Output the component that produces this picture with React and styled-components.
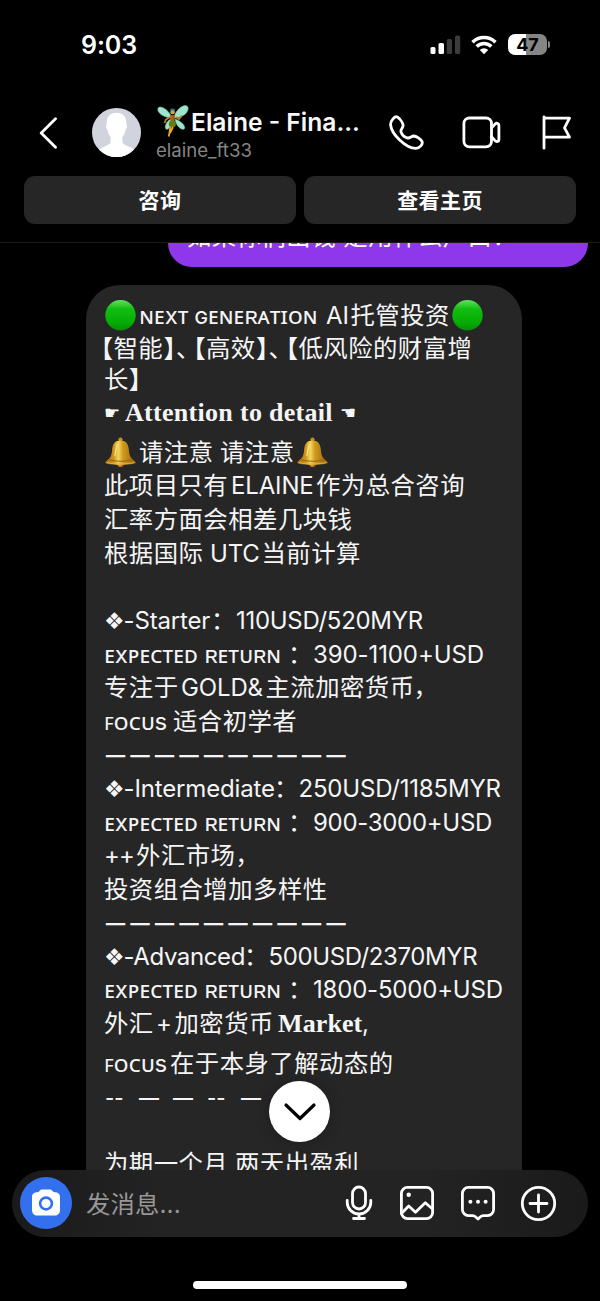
import styled, { createGlobalStyle, css } from "styled-components";

const GlobalStyle = createGlobalStyle`
  * {
    box-sizing: border-box;
  }

  body {
    margin: 0;
    background: #000;
    color: #f5f5f5;
    font-family: Inter, "Noto Sans CJK SC", sans-serif;
  }

  svg {
    display: block;
    flex-shrink: 0;
  }
`;

const Screen = styled.div`
  display: flex;
  flex-direction: column;
  width: 600px;
  height: 1301px;
  background: #000;
  overflow: hidden;
`;

const Header = styled.header`
  flex: 0 0 243px;
  border-bottom: 1px solid #1b1b1b;
`;

const StatusBar = styled.div`
  display: flex;
  align-items: center;
  height: 90px;
  padding: 0 50px 0 81px;
`;

const Clock = styled.div`
  flex: 1;
  color: #fff;
  font-size: 25px;
  font-weight: 600;
  letter-spacing: -0.1px;
`;

const StatusIcons = styled.div`
  display: flex;
  align-items: center;
  margin-top: -1px;
`;

const Battery = styled.div`
  display: flex;
  align-items: center;
  justify-content: center;
  width: 39px;
  height: 21px;
  margin-left: 11px;
  border-radius: 7px;
  background: linear-gradient(90deg, #fff 47%, #858585 47%);
  color: #000;
  font-size: 18px;
  font-weight: 700;
  line-height: 21px;
`;

const BatteryTip = styled.span`
  width: 2px;
  height: 7px;
  margin-left: 1px;
  border-radius: 0 2px 2px 0;
  background: #858585;
`;

const NavBar = styled.div`
  display: flex;
  align-items: center;
  height: 86px;
  padding-left: 39px;
`;

const Avatar = styled.div`
  width: 49px;
  height: 49px;
  margin: -1px 0 0 34px;
  border-radius: 50%;
  overflow: hidden;
`;

const Contact = styled.div`
  width: 218px;
  margin: 3px 0 0 15px;
`;

const ContactName = styled.div`
  display: flex;
  align-items: center;
  height: 32px;
  color: #f8f8f8;
  font-size: 24.6px;
  font-weight: 600;
  white-space: nowrap;

  svg {
    margin: -2px 2px 0 1px;
  }
`;

const ContactHandle = styled.div`
  height: 26px;
  color: #858585;
  font-size: 18.6px;
  line-height: 25px;
`;

const NavActions = styled.div`
  display: flex;
  align-items: center;
  margin: -1px 0 0 15px;
`;

const Actions = styled.div`
  display: flex;
  gap: 8px;
  padding: 0 24px;
`;

const ActionButton = styled.button`
  flex: 1;
  height: 48px;
  padding: 0 0 2px;
  border: 0;
  border-radius: 11px;
  background: #262626;
  color: #fff;
  font: 700 21px "Noto Sans CJK SC", sans-serif;
  letter-spacing: 0.4px;
`;

const Thread = styled.main`
  position: relative;
  flex: 0 0 927px;
  display: flex;
  flex-direction: column;
  overflow: hidden;
`;

const SentBubble = styled.div`
  flex: 0 0 24px;
  display: flex;
  align-items: flex-end;
  align-self: flex-end;
  width: 420px;
  margin-right: 12px;
  padding: 0 19px 13px;
  border-radius: 0 0 27px 27px;
  background: #8f38eb;
  color: #fff;
  font-size: 24.4px;
  line-height: 36px;
  letter-spacing: 0.45px;
  white-space: nowrap;
  overflow: hidden;
`;

const ReceivedBubble = styled.div`
  flex: 0 0 950px;
  width: 436px;
  margin: 18px 0 0 86px;
  padding: 13.5px 0 0 18px;
  border-radius: 34px 34px 0 0;
  background: #262626;
`;

const Line = styled.div`
  height: 33.6px;
  margin-top: ${({ $gap }) => $gap || 0}px;
  margin-left: ${({ $indent }) => $indent || 0}px;
  font-size: 24px;
  line-height: 33.6px;
  white-space: nowrap;
`;

const kinds = {
  latin: css`
    font-size: 24px;
    letter-spacing: -0.15px;
  `,
  cjk: css`
    font-family: "Noto Sans CJK SC", sans-serif;
    font-size: 24.4px;
    letter-spacing: 0.45px;
  `,
  half: css`
    font-family: "Noto Sans CJK SC", sans-serif;
    font-size: 24.4px;
    font-feature-settings: "halt";
  `,
  bracket: css`
    font-family: "Noto Sans CJK SC", sans-serif;
    font-size: 24.4px;
    font-weight: 700;
    font-feature-settings: "halt";
  `,
  caps: css`
    font-family: Inter, "Noto Sans", sans-serif;
    font-size: 24px;
    letter-spacing: -0.35px;
  `,
  serif: css`
    font-family: "Liberation Serif", serif;
    font-size: 26px;
    font-weight: 700;
    letter-spacing: 0.3px;
  `,
  symbol: css`
    font-family: "DejaVu Sans", sans-serif;
    font-size: 23px;
  `,
  hand: css`
    font-family: "DejaVu Sans", sans-serif;
    font-size: 18px;
    font-weight: 700;
    vertical-align: 2px;
  `,
  rule: css`
    padding-left: 1px;
    font-family: "Noto Sans CJK SC", sans-serif;
    font-size: 21px;
    font-weight: 500;
    letter-spacing: 3.5px;
    vertical-align: -1px;
  `,
  dash: css`
    padding-left: 1px;
    font-size: 20px;
    font-weight: 500;
    letter-spacing: 0;
  `,
};

const Run = styled.span`
  display: inline-block;
  width: ${({ $w }) => $w}px;
  line-height: 0;
  white-space: pre;
  ${({ $kind }) => kinds[$kind]}
  ${({ $track }) =>
    $track !== undefined &&
    css`
      letter-spacing: ${$track}px;
    `}
`;

const Emoji = styled.span`
  display: inline-block;
  width: ${({ $w }) => $w}px;
  height: 31px;
  vertical-align: -7px;

  svg {
    margin-left: 1px;
  }
`;

const ScrollButton = styled.button`
  position: absolute;
  bottom: 28px;
  left: 269px;
  display: flex;
  align-items: center;
  justify-content: center;
  width: 61px;
  height: 61px;
  padding: 0;
  border: 0;
  border-radius: 50%;
  background: #fff;
  box-shadow: 0 0 14px rgba(0, 0, 0, 0.25);
`;

const Composer = styled.footer`
  flex: 0 0 67px;
  display: flex;
  align-items: center;
  margin: 0 12px;
  padding: 0 31px 1px 8px;
  border-radius: 34px;
  background: linear-gradient(90deg, #1a1a1a, #232323 25%, #232323 72%, #1a1a1a);
`;

const CameraButton = styled.div`
  display: flex;
  align-items: center;
  justify-content: center;
  width: 52px;
  height: 52px;
  border-radius: 50%;
  background: #3370ee;
`;

const Placeholder = styled.div`
  flex: 1;
  margin: -2px 0 0 14px;
  color: #979797;
  font-size: 24.4px;
  letter-spacing: 0.1px;
`;

const Tools = styled.div`
  display: flex;
  align-items: center;
`;

const HomeIndicator = styled.div`
  width: 214px;
  height: 8px;
  margin: 44px auto 0 193px;
  border-radius: 4px;
  background: #fff;
`;

const WifiIcon = styled.svg`
  margin-left: 10px;
`;

const LineIcon = styled.svg`
  margin-left: ${({ $left }) => $left || 0}px;
  fill: none;
  stroke: #fff;
  stroke-width: 2.8;
  stroke-linejoin: round;
  stroke-linecap: round;
`;

const Dot = styled.circle`
  fill: #fff;
  stroke: none;
`;

const GreenCircle = () => (
  <svg width="31" height="31" viewBox="0 0 31 31">
    <defs>
      <linearGradient id="green" x1="0" y1="0" x2="0" y2="1">
        <stop offset="0" stopColor="#5fe25c" />
        <stop offset="0.3" stopColor="#12bd10" />
        <stop offset="0.75" stopColor="#04ac04" />
        <stop offset="1" stopColor="#078c06" />
      </linearGradient>
    </defs>
    <circle cx="15.5" cy="15.2" r="15.2" fill="url(#green)" />
  </svg>
);

const Bell = () => (
  <svg width="31" height="31" viewBox="0 0 31 31">
    <defs>
      <linearGradient id="gold" x1="0" x2="1">
        <stop offset="0" stopColor="#a66c10" />
        <stop offset="0.28" stopColor="#cf951d" />
        <stop offset="0.43" stopColor="#f5d75a" />
        <stop offset="0.58" stopColor="#cf9a1f" />
        <stop offset="1" stopColor="#9a610b" />
      </linearGradient>
    </defs>
    <circle cx="15.5" cy="2.6" r="2.1" fill="#c48e20" />
    <circle cx="15.5" cy="26.8" r="3.4" fill="#a96812" />
    <path
      d="M15.5 3.5c5.4 0 7.8 3.3 8.3 8.5.5 6.2 1 8.5 6.4 12.5 1 1.1.3 2-1.2 2.3-8 1.5-19 1.5-27 0-1.5-.3-2.2-1.2-1.2-2.3C6.2 20.5 6.7 18.2 7.2 12c.5-5.2 2.9-8.5 8.3-8.5z"
      fill="url(#gold)"
    />
    <path d="M4.5 22.6c6 2.2 16 2.2 22 0" fill="none" stroke="#94600d" strokeWidth="1" />
    <path d="M1.5 25.4c7 2 21 2 28 0" fill="none" stroke="#e0b63c" strokeWidth="1" />
    <path d="M12.5 7c-1.6 3-1.8 9-2.8 12" fill="none" stroke="#f5e288" strokeWidth="1.3" />
    <circle cx="15" cy="28" r="1.3" fill="#e3a23a" />
  </svg>
);

const Fairy = () => (
  <svg width="32" height="32" viewBox="0 0 32 32">
    <g fill="#9de5ce" stroke="#69b9a5" strokeWidth="0.6">
      <path d="M14.5 13C11 13 3 10.5 1 6 .2 2.5 2 1.5 4.5 2.3 9 3.5 13.5 8 14.5 13z" />
      <path d="M17 13C17.5 7.5 23 1.5 27.5.6c3.5-.4 4.6 2.5 2.9 5.6C28.5 10.5 22 13 17 13z" />
      <path d="M14 14c-3.5 1.5-6 5.5-5.7 8.8.8 2.4 3.2 1.7 4.2-.3C14 20 15 17 14 14z" />
      <path d="M18 14c3.5 1 8.5 4.3 9.7 8 .5 2.5-2 3-4.2 1.6C20.5 21.5 18.5 18 18 14z" />
    </g>
    <path d="M13 12l-4 2.5-1.5 3.5M19 12l3 2 3-3.5" fill="none" stroke="#bd8425" strokeWidth="1.7" />
    <path d="M13 4.5c1-1.4 4.5-1.4 5 .5L17.5 9h-4z" fill="#276e75" />
    <circle cx="15.6" cy="7.2" r="2" fill="#dba13a" />
    <path d="M13.2 10h5l-.8 6h-3.6z" fill="#a85e17" />
    <path d="M13.5 15.5h4.2c2 2.5 1.5 6-.5 6.5-3 .5-5.5-.5-5.5-2.5 0-1.5.8-3 1.800-4z" fill="#667d16" />
    <path d="M13.5 21.5L11.8 31.5M16 22l-3 6" fill="none" stroke="#efa60f" strokeWidth="1.8" />
  </svg>
);

const emojis = { green: GreenCircle, bell: Bell };

// each run: [kind, text, advance, letter spacing]
const lines = [
  {
    runs: [
      ["green", "", 35],
      ["caps", "ɴᴇxᴛ ɢᴇɴᴇʀᴀᴛɪᴏɴ", 187],
      ["latin", "AI", 24.5],
      ["cjk", "托管投资", 100.5],
      ["green", "", 32],
    ],
  },
  {
    gap: 0.2,
    indent: -3,
    runs: [
      ["bracket", "【", 12.5],
      ["cjk", "智能", 50],
      ["bracket", "】", 12.5],
      ["half", "、", 17.5],
      ["bracket", "【", 12.5],
      ["cjk", "高效", 50],
      ["bracket", "】", 12.5],
      ["half", "、", 17.5],
      ["bracket", "【", 12.5],
      ["cjk", "低风险的财富增", 175],
    ],
  },
  { gap: -3.1, runs: [["cjk", "长", 24.8], ["bracket", "】", 13]] },
  {
    gap: -0.2,
    runs: [["hand", "☛", 21], ["serif", "Attention to detail", 215], ["hand", "☚", 20]],
  },
  {
    gap: 6,
    runs: [["bell", "", 35], ["cjk", "请注意", 81], ["cjk", "请注意", 76], ["bell", "", 32]],
  },
  { runs: [["cjk", "此项目只有", 127], ["latin", "ELAINE", 85], ["cjk", "作为总合咨询", 150]] },
  { gap: 0.2, runs: [["cjk", "汇率方面会相差几块钱", 250]] },
  { runs: [["cjk", "根据国际", 106], ["latin", "UTC", 51.5], ["cjk", "当前计算", 100]] },
  { runs: [] },
  {
    runs: [
      ["symbol", "❖", 19.5],
      ["latin", "-Starter", 87.5],
      ["cjk", "：", 25],
      ["latin", "110USD/520MYR", 190, -0.3],
    ],
  },
  {
    runs: [["caps", "ᴇxᴘᴇᴄᴛᴇᴅ ʀᴇᴛᴜʀɴ", 184], ["cjk", "：", 25], ["latin", "390-1100+USD", 180, -0.1]],
  },
  {
    runs: [["cjk", "专注于", 77], ["latin", "GOLD&", 84.5], ["cjk", "主流加密货币", 148], ["cjk", "，", 24]],
  },
  { runs: [["caps", "ꜰᴏᴄᴜs", 69], ["cjk", "适合初学者", 126]] },
  { runs: [["rule", "一一一一一一一一一一", 250]] },
  {
    runs: [
      ["symbol", "❖", 19.5],
      ["latin", "-Intermediate", 150.5],
      ["cjk", "：", 24.5],
      ["latin", "250USD/1185MYR", 204, -0.2],
    ],
  },
  {
    runs: [["caps", "ᴇxᴘᴇᴄᴛᴇᴅ ʀᴇᴛᴜʀɴ", 184], ["cjk", "：", 25], ["latin", "900-3000+USD", 180, -0.3]],
  },
  { runs: [["latin", "++", 32, -1], ["cjk", "外汇市场，", 126]] },
  { runs: [["cjk", "投资组合增加多样性", 226]] },
  { runs: [["rule", "一一一一一一一一一一", 250]] },
  {
    runs: [
      ["symbol", "❖", 19.5],
      ["latin", "-Advanced", 120.5, -0.4],
      ["cjk", "：", 24.5],
      ["latin", "500USD/2370MYR", 210, -0.4],
    ],
  },
  {
    runs: [["caps", "ᴇxᴘᴇᴄᴛᴇᴅ ʀᴇᴛᴜʀɴ", 184], ["cjk", "：", 25], ["latin", "1800-5000+USD", 192, -0.2]],
  },
  {
    runs: [
      ["cjk", "外汇", 52],
      ["latin", "+", 18.5],
      ["cjk", "加密货币", 103.5],
      ["serif", "Market", 84, 0.1],
      ["latin", ",", 24],
    ],
  },
  { gap: 6, runs: [["caps", "ꜰᴏᴄᴜs", 66], ["cjk", "在于本身了解动态的", 226]] },
  {
    runs: [
      ["dash", "--", 34],
      ["dash", "—", 34],
      ["dash", "—", 34],
      ["dash", "--", 34],
      ["dash", "—", 34],
    ],
  },
  { runs: [] },
  { runs: [["cjk", "为期一个月", 131], ["cjk", "两天出盈利", 126]] },
];

function MessageLine({ runs, gap, indent }) {
  return (
    <Line $gap={gap} $indent={indent}>
      {runs.map(([kind, text, width, track], i) => {
        const Icon = emojis[kind];
        return Icon ? (
          <Emoji key={i} $w={width}>
            <Icon />
          </Emoji>
        ) : (
          <Run key={i} $kind={kind} $w={width} $track={track}>
            {text}
          </Run>
        );
      })}
    </Line>
  );
}

export default function App() {
  return (
    <>
      <GlobalStyle />
      <Screen>
        <Header>
          <StatusBar>
            <Clock>9:03</Clock>
            <StatusIcons>
              <svg width="31" height="20" viewBox="0 0 31 20">
                <rect x="0.5" y="12" width="5" height="7" rx="1.5" fill="#fff" />
                <rect x="8.5" y="8" width="5.5" height="11" rx="1.5" fill="#fff" />
                <rect x="16.8" y="4" width="5.2" height="15" rx="1.5" fill="#3b3b3b" />
                <rect x="25" y="0.5" width="5.2" height="18.5" rx="1.5" fill="#3b3b3b" />
              </svg>
              <WifiIcon width="26" height="20" viewBox="0 0 26 20">
                <g fill="none" stroke="#fff" strokeWidth="3.4">
                  <path d="M1.5 7.2a16.4 16.4 0 0 1 23 0" />
                  <path d="M5.7 11.5a10.3 10.3 0 0 1 14.6 0" />
                </g>
                <path d="M8.8 15a6 6 0 0 1 8.4 0L13 19.2z" fill="#fff" />
              </WifiIcon>
              <Battery>47</Battery>
              <BatteryTip />
            </StatusIcons>
          </StatusBar>
          <NavBar>
            <LineIcon width="19" height="32" viewBox="0 0 19 32">
              <path d="M16.5 1.8L2.2 16l14.3 14.2" />
            </LineIcon>
            <Avatar>
              <svg width="49" height="49" viewBox="0 0 49 49">
                <rect width="49" height="49" fill="#d1d4dc" />
                <path
                  d="M24.5 4.8c6.5 0 9.8 4 9.8 9.7v1.8c1 .8.8 4.2-.7 5.4-.5 3-1.6 5.4-3.2 7v5.4c0 3.6 9.8 4.6 13.6 9.4V50H5v-6.5c3.8-4.8 13.6-5.8 13.6-9.4v-5.4c-1.6-1.6-2.7-4-3.2-7-1.5-1.2-1.7-4.6-.7-5.4v-1.8c0-5.700 3.300-9.700 9.800-9.700z"
                  fill="#fff"
                />
              </svg>
            </Avatar>
            <Contact>
              <ContactName>
                <Fairy />
                Elaine - Fina...
              </ContactName>
              <ContactHandle>elaine_ft33</ContactHandle>
            </Contact>
            <NavActions>
              <LineIcon width="35" height="35" viewBox="0 0 35 35">
                <path d="M3.6 4.3C5.2 2.2 7.2 1.2 8.6 2.2c2.5 1.8 5.2 5.8 5.5 8.1.2 2.3-2.8 4-2.1 6.600.9 2.800 3.400 5.200 6.200 6 2.600.8 4.200-1.900 6.500-1.900 2.600.1 7.200 3.200 8.400 5.700.9 2.300-2.200 6.500-6.300 6.700C16.500 33.400 2.500 19 1.600 10c-.2-2.300.6-4.100 2-5.700z" />
              </LineIcon>
              <LineIcon $left={38} width="39" height="33" viewBox="0 0 39 33">
                <rect x="1.9" y="2" width="27.6" height="28.8" rx="5.5" />
                <path d="M29.5 12.2l3.5-4c1.5-1.7 3.9-1 3.9 1.2v14c0 2.2-2.4 2.9-3.9 1.2l-3.5-4" />
              </LineIcon>
              <LineIcon $left={40} width="31" height="35" viewBox="0 0 31 35">
                <path d="M3 33.2V1.8M3 3.2h25.5l-5 9.6 5 9.4H3" />
              </LineIcon>
            </NavActions>
          </NavBar>
          <Actions>
            <ActionButton>咨询</ActionButton>
            <ActionButton>查看主页</ActionButton>
          </Actions>
        </Header>

        <Thread>
          <SentBubble>如果你们出钱 是用什么户口？</SentBubble>
          <ReceivedBubble>
            {lines.map((line, i) => (
              <MessageLine key={i} {...line} />
            ))}
          </ReceivedBubble>
          <ScrollButton>
            <svg width="34" height="20" viewBox="0 0 34 20">
              <path
                d="M3 3l14 13.5L31 3"
                fill="none"
                stroke="#000"
                strokeWidth="3.2"
                strokeLinecap="round"
                strokeLinejoin="round"
              />
            </svg>
          </ScrollButton>
        </Thread>

        <Composer>
          <CameraButton>
            <svg width="30" height="30" viewBox="0 0 30 30">
              <path
                d="M10.5 1.5h9c1.6 0 2 2.7 4 2.7 3.5 0 5.5 1.8 5.5 5v12.5c0 3.6-2 5.8-5.6 5.8H6.6C3 27.5 1 25.3 1 21.7V9.2c0-3.2 2-5 5.5-5 2 0 2.4-2.7 4-2.7z"
                fill="#fff"
              />
              <circle cx="15" cy="15.5" r="5.9" fill="none" stroke="#3370ee" strokeWidth="2.6" />
            </svg>
          </CameraButton>
          <Placeholder>发消息...</Placeholder>
          <Tools>
            <LineIcon width="28" height="36" viewBox="0 0 28 36">
              <rect x="7.5" y="2" width="13" height="22" rx="6.5" />
              <path d="M2.2 15.5v1.7a11.8 11.8 0 0 0 23.6 0v-1.7M14 29v4M8.5 33.5h11" />
            </LineIcon>
            <LineIcon $left={26} width="36" height="36" viewBox="0 0 36 36">
              <rect x="2.4" y="2.4" width="31.2" height="31.2" rx="6" />
              <path d="M2.5 28.5l7.2-7.5 6.8 6.3L26.3 17.8l7.2 6.2" />
              <Dot cx="9.7" cy="9.8" r="2.2" />
            </LineIcon>
            <LineIcon $left={25} width="36" height="38" viewBox="0 0 36 38">
              <path d="M8.4 3.4h19.2a6 6 0 0 1 6 6v16.2a6 6 0 0 1-6 6h-4.6c-1.8 0-2.8 1.3-5 3.5-2.2-2.2-3.2-3.5-5-3.5H8.4a6 6 0 0 1-6-6V9.4a6 6 0 0 1 6-6z" />
              <Dot cx="10.4" cy="17.8" r="2" />
              <Dot cx="18" cy="17.8" r="2" />
              <Dot cx="25.6" cy="17.8" r="2" />
            </LineIcon>
            <LineIcon $left={24} width="37" height="37" viewBox="0 0 37 37">
              <circle cx="18.5" cy="18.5" r="16.2" />
              <path d="M18.5 10v17M10 18.5h17" />
            </LineIcon>
          </Tools>
        </Composer>
        <HomeIndicator />
      </Screen>
    </>
  );
}
